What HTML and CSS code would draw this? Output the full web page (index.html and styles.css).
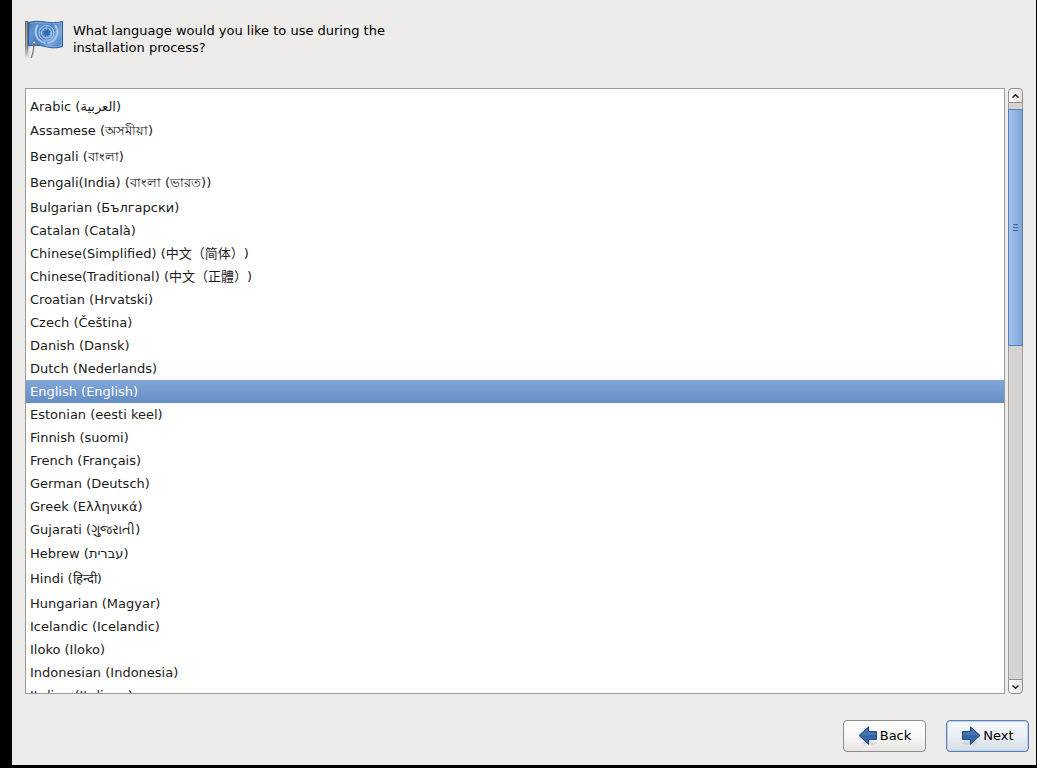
FILE: index.html
```html
<!DOCTYPE html>
<html lang="en">
<head>
    <meta charset="UTF-8">
    <meta name="viewport" content="width=device-width, initial-scale=1.0">
    <title>Installation Language</title>
    <link rel="stylesheet" href="styles.css">
</head>
<body>

<form class="window">
    <header class="header">
        <svg class="flag" viewBox="0 0 40 40" aria-hidden="true">
            <defs>
                <linearGradient id="pole" x1="0" y1="0" x2="0" y2="1">
                    <stop offset="0" stop-color="#63665f"/>
                    <stop offset="0.65" stop-color="#777a73"/>
                    <stop offset="1" stop-color="#777a73" stop-opacity="0"/>
                </linearGradient>
                <linearGradient id="cloth" x1="0" y1="0" x2="1" y2="0.6">
                    <stop offset="0" stop-color="#3f74b4"/>
                    <stop offset="0.25" stop-color="#6094d0"/>
                    <stop offset="0.55" stop-color="#4a7fc0"/>
                    <stop offset="0.85" stop-color="#79a8dc"/>
                    <stop offset="1" stop-color="#5a8fcd"/>
                </linearGradient>
            </defs>
            <rect x="0" y="1" width="3.500" height="38" rx="1" fill="url(#pole)"/>
            <rect x="1" y="2" width="1" height="32" fill="#b4b6af" opacity="0.7"/>
            <path d="M3.500 2.500C9 1 14 1 20 2S31 3 37.500 1.500V26.500C31 28.500 26 28 20 26.500S10 25 3.500 26Z" fill="url(#cloth)" stroke="#2d5a99"/>
            <path d="M5 3.500C10 2.200 15 2.200 20 3.200S31 4 36.500 2.800V25.500C31 27.300 26 26.800 20 25.400" fill="none" stroke="#91b9e8" opacity="0.6"/>
            <g fill="none" stroke="#a9c8ec">
                <circle cx="21.500" cy="13" r="7.500"/>
                <circle cx="21.500" cy="13" r="5"/>
                <path d="M13 5C8.500 11 10.500 21 20.500 23M30 5C34.500 11 32.500 21 22.500 23" stroke-width="2"/>
                <path d="M14 13H29M21.500 5.500V20.500M16 7.500L27 18.500M27 7.500L16 18.500" stroke-width="0.500"/>
            </g>
            <path d="M18.500 11.500L22 9.500L25 11.500L24 15L20.500 16L19 14Z" fill="#2f67a8"/>
            <path d="M9 22C9 29 8 34 6 38" fill="none" stroke="#777a75" stroke-width="1.300"/>
            <circle cx="9" cy="22.500" r="1.500" fill="#e6ebf2" stroke="#5c6878" stroke-width="0.800"/>
        </svg>
        <h1 class="question">What language would you like to use during the installation process?</h1>
    </header>

    <div class="chooser">
        <ul class="languages" id="languages">
            <li><label class="language"><input type="radio" name="lang">Afrikaans (Afrikaans)</label></li>
            <li><label class="language"><input type="radio" name="lang">Arabic (<bdi lang="ar">العربية</bdi>)</label></li>
            <li><label class="language tall"><input type="radio" name="lang">Assamese (<bdi lang="as">অসমীয়া</bdi>)</label></li>
            <li><label class="language tall"><input type="radio" name="lang">Bengali (<bdi lang="bn">বাংলা</bdi>)</label></li>
            <li><label class="language tall"><input type="radio" name="lang">Bengali(India) (<bdi lang="bn">বাংলা (ভারত)</bdi>)</label></li>
            <li><label class="language"><input type="radio" name="lang">Bulgarian (Български)</label></li>
            <li><label class="language"><input type="radio" name="lang">Catalan (Català)</label></li>
            <li><label class="language"><input type="radio" name="lang">Chinese(Simplified) (<bdi lang="zh-CN">中文（简体）</bdi>)</label></li>
            <li><label class="language"><input type="radio" name="lang">Chinese(Traditional) (<bdi lang="zh-TW">中文（正體）</bdi>)</label></li>
            <li><label class="language"><input type="radio" name="lang">Croatian (Hrvatski)</label></li>
            <li><label class="language"><input type="radio" name="lang">Czech (Čeština)</label></li>
            <li><label class="language"><input type="radio" name="lang">Danish (Dansk)</label></li>
            <li><label class="language"><input type="radio" name="lang">Dutch (Nederlands)</label></li>
            <li><label class="language"><input type="radio" name="lang" checked>English (English)</label></li>
            <li><label class="language"><input type="radio" name="lang">Estonian (eesti keel)</label></li>
            <li><label class="language"><input type="radio" name="lang">Finnish (suomi)</label></li>
            <li><label class="language"><input type="radio" name="lang">French (Français)</label></li>
            <li><label class="language"><input type="radio" name="lang">German (Deutsch)</label></li>
            <li><label class="language"><input type="radio" name="lang">Greek (Ελληνικά)</label></li>
            <li><label class="language medium"><input type="radio" name="lang">Gujarati (<bdi lang="gu">ગુજરાતી</bdi>)</label></li>
            <li><label class="language medium"><input type="radio" name="lang">Hebrew (<bdi lang="he">עברית</bdi>)</label></li>
            <li><label class="language tall"><input type="radio" name="lang">Hindi (<bdi lang="hi">हिन्दी</bdi>)</label></li>
            <li><label class="language"><input type="radio" name="lang">Hungarian (Magyar)</label></li>
            <li><label class="language"><input type="radio" name="lang">Icelandic (Icelandic)</label></li>
            <li><label class="language"><input type="radio" name="lang">Iloko (Iloko)</label></li>
            <li><label class="language"><input type="radio" name="lang">Indonesian (Indonesia)</label></li>
            <li><label class="language"><input type="radio" name="lang">Italian (Italiano)</label></li>
        </ul>
        <div class="scrollbar">
            <button type="button" class="step step-up" id="scroll-up" aria-label="Scroll up">
                <svg viewBox="0 0 7 4" aria-hidden="true"><path d="M.5 3.500L3.500 .8L6.500 3.500"/></svg>
            </button>
            <div class="track"><div class="thumb"><span class="grip"></span></div></div>
            <button type="button" class="step step-down" id="scroll-down" aria-label="Scroll down">
                <svg viewBox="0 0 7 4" aria-hidden="true"><path d="M.5 .5L3.500 3.200L6.500 .5"/></svg>
            </button>
        </div>
    </div>

    <footer class="actions">
        <button type="button" class="button">
            <svg class="arrow" viewBox="0 -1 20 20" aria-hidden="true">
                <ellipse cx="11" cy="17" rx="8" ry="2" fill="#000" opacity="0.08"/>
                <path d="M1 9.500L10.500 .8V5.500H18.500V13.500H10.500V18.200Z" fill="#3465a4" stroke="#204a87"/>
                <path d="M2.500 9.500L9.500 3V6.500H17.500V9Z" fill="#6f9bd0" opacity="0.3"/>
            </svg>
            Back
        </button>
        <button type="submit" class="button default">
            <svg class="arrow" viewBox="0 -1 20 20" aria-hidden="true">
                <ellipse cx="9" cy="17" rx="8" ry="2" fill="#000" opacity="0.08"/>
                <path d="M19 9.500L9.500 .8V5.500H1.500V13.500H9.500V18.200Z" fill="#3465a4" stroke="#204a87"/>
                <path d="M17.500 9.500L10.500 3V6.500H2.500V9Z" fill="#6f9bd0" opacity="0.3"/>
            </svg>
            Next
        </button>
    </footer>
</form>

<script>
    const languages = document.getElementById('languages');

    languages.scrollTop = 17;

    document.getElementById('scroll-up').addEventListener('click', () => {
        languages.scrollTop -= 23;
    });
    document.getElementById('scroll-down').addEventListener('click', () => {
        languages.scrollTop += 23;
    });
</script>

</body>
</html>
```

FILE: styles.css
```css
* {
    box-sizing: border-box;
}
body {
    font-family: "DejaVu Sans", "Noto Sans CJK SC", sans-serif;
    font-size: 13px;
    line-height: 17px;
    color: #000;
    background-color: #000;
    margin: 0;
    padding: 0 1px 3px 12px;
    height: 100vh;
}
.window {
    display: flex;
    flex-direction: column;
    height: 100%;
    padding: 20px 13px 13px;
    background-color: #edeceb;
}
.header {
    display: flex;
    gap: 8px;
    height: 68px;
}
.flag {
    width: 40px;
    height: 40px;
}
.question {
    width: 330px;
    margin: 2px 0;
    font-size: 13px;
    font-weight: normal;
}
.chooser {
    display: flex;
    flex: 1;
    gap: 3px;
    min-height: 0;
}
.languages {
    flex: 1;
    margin: 0;
    padding: 0;
    list-style: none;
    overflow-y: scroll;
    scrollbar-width: none;
    background-color: #fff;
    border: 1px solid #9c9a98;
}
.language {
    display: block;
    height: 23px;
    padding: 0 4px;
    line-height: 23px;
    white-space: nowrap;
    color: #1a1a1a;
}
.language.medium {
    height: 24px;
    line-height: 24px;
}
.language.tall {
    height: 26px;
    line-height: 25px;
}
.language:has(input:checked) {
    color: #fff;
    background: linear-gradient(#82a6d8, #648dc4);
}
.language input {
    position: absolute;
    opacity: 0;
    pointer-events: none;
}
.language [lang="zh-TW"] {
    font-family: "DejaVu Sans", "Noto Sans CJK TC", sans-serif;
}
.scrollbar {
    display: flex;
    flex-direction: column;
    width: 15px;
}
.step {
    display: flex;
    align-items: center;
    justify-content: center;
    height: 15px;
    padding: 0;
    background: linear-gradient(90deg, #fff, #e4e3e1);
    border: 1px solid #91908e;
}
.step-up {
    border-radius: 4px 4px 0 0;
}
.step-down {
    border-radius: 0 0 4px 4px;
}
.step svg {
    width: 7px;
    height: 4px;
    fill: none;
    stroke: #222;
    stroke-width: 1.5;
}
.track {
    flex: 1;
    padding-top: 6px;
    background-color: #d5d4d2;
    border: solid #a19f9d;
    border-width: 0 1px;
}
.thumb {
    display: flex;
    align-items: center;
    justify-content: center;
    height: 237px;
    margin: 0 -1px;
    background: linear-gradient(90deg, #a4c4ec, #7da4d8);
    border: 1px solid #5b7fb3;
}
.grip {
    width: 5px;
    height: 7px;
    background: repeating-linear-gradient(#3f659b 0 1px, transparent 1px 3px);
}
.actions {
    display: flex;
    justify-content: flex-end;
    gap: 20px;
    margin: 26px -6px 0 0;
}
.button {
    display: flex;
    align-items: center;
    justify-content: center;
    gap: 2px;
    width: 83px;
    height: 32px;
    padding: 0 0 2px;
    font: inherit;
    color: #000;
    background: linear-gradient(#fff, #f8f8f7 50%, #e6e5e3);
    border: 1px solid #8f8d8b;
    border-radius: 4px;
    cursor: pointer;
}
.button.default {
    background: linear-gradient(#f6f9fd, #eaeff6 50%, #d6dce4);
    border-color: #5a7fb2;
    box-shadow: inset 0 0 0 1px #b9cfeb;
}
.arrow {
    width: 20px;
    height: 20px;
}
```
